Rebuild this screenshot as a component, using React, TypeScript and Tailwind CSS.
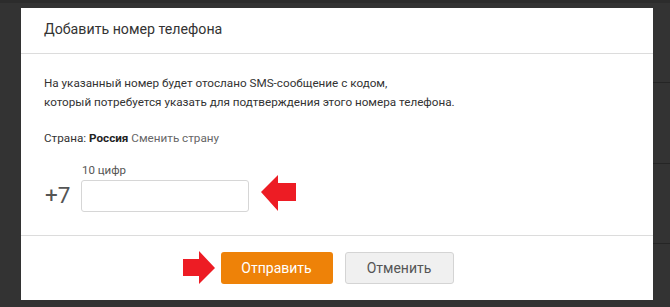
export default function App() {
  return (
    <div
      className="relative w-[670px] h-[307px] bg-[#333333] overflow-hidden flex"
      style={{ fontFamily: 'Roboto, "Liberation Sans", Arial, sans-serif' }}
    >
      {/* page behind the dialog */}
      <div className="absolute inset-x-0 top-0 h-[3px] bg-[#2c2c2c]" />
      <div className="absolute right-0 top-[82px] w-[17px] h-px bg-[#252525]" />
      <div className="absolute right-0 top-[163px] w-[17px] h-px bg-[#252525]" />
      <div className="absolute right-0 top-[243px] w-[17px] h-px bg-[#252525]" />

      <div className="relative ml-[21px] mt-[8px] w-[632px] h-[292px] bg-white flex flex-col">
        <div className="h-[46px] border-b border-[#dcdcdc] flex items-center px-[23px]">
          <h2 className="text-[14.2px] text-[#333] pb-[1px]">Добавить номер телефона</h2>
        </div>

        <div className="flex-1 px-[23px] pt-[20px] text-[11.7px] text-[#333]">
          <p className="leading-[19px]">
            На указанный номер будет отослано SMS-сообщение с кодом,
            <br />
            который потребуется указать для подтверждения этого номера телефона.
          </p>
          <p className="mt-[17px] leading-[19px]">
            Страна: <b className="font-bold text-[#222]">Россия</b>{' '}
            <span className="text-[#666]">Сменить страну</span>
          </p>

          <div className="mt-[16px] flex items-end">
            <span className="text-[22.5px] leading-none text-[#555] mb-[6px] ml-[1px] w-[36px]">+7</span>
            <div className="flex flex-col">
              <span className="text-[11.5px] leading-[13px] text-[#555] ml-[1px] mb-[3px]">10 цифр</span>
              <input className="w-[168px] h-[32px] border border-[#d6d6d6] rounded-[3px] outline-none px-2" />
            </div>
            <svg width="36" height="37" viewBox="0 0 36 37" className="ml-[12px]">
              <polygon points="0,17 17,0 17,8 35,8 35,26 17,26 17,36" fill="#ed1c24" />
            </svg>
          </div>
        </div>

        <div className="h-[65px] border-t border-[#dcdcdc] flex justify-center items-start pt-[16px] gap-[12px]">
          <div className="relative">
            <svg width="33" height="34" viewBox="0 0 33 34" className="absolute left-[-38px] top-[-1px]">
              <polygon points="0,8 16,8 16,0 32,17 16,33 16,25 0,25" fill="#ed1c24" />
            </svg>
            <button className="w-[112px] h-[32px] rounded-[3px] bg-[#ee8208] text-white text-[14px]">
              Отправить
            </button>
          </div>
          <button className="w-[109px] h-[32px] rounded-[3px] bg-[#f0f0f0] border border-[#d4d4d4] text-[#555] text-[14px]">
            Отменить
          </button>
        </div>
      </div>
    </div>
  );
}
